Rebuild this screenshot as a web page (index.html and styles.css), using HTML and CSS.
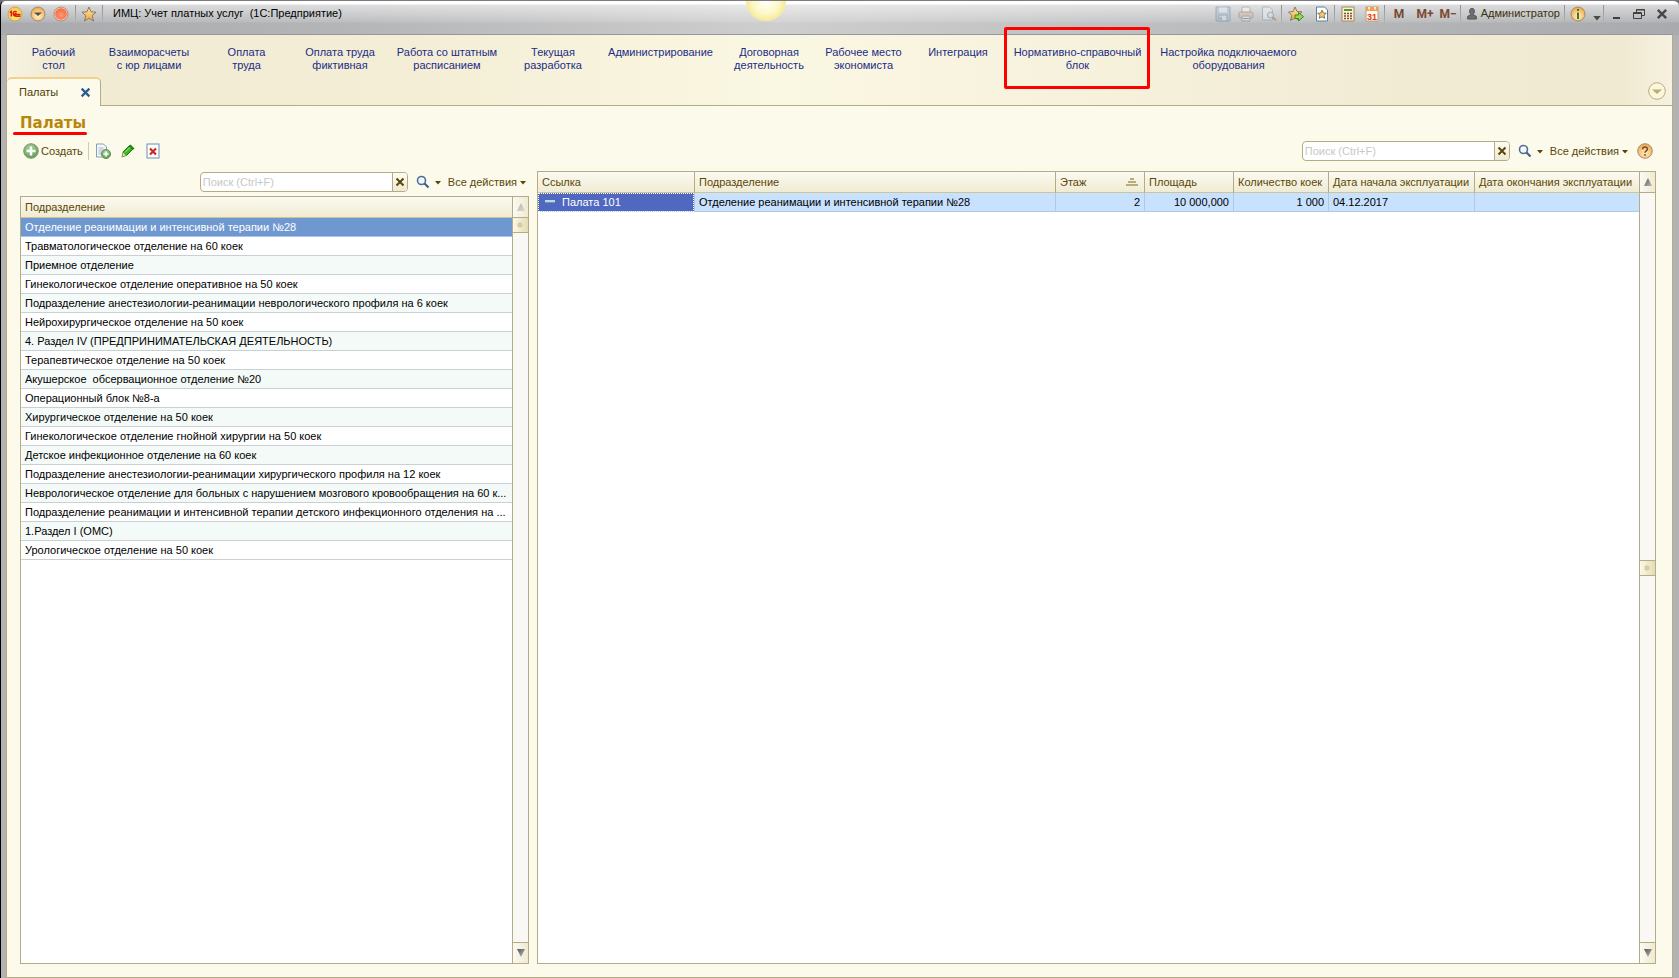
FILE: index.html
```html
<!DOCTYPE html>
<html lang="ru">
<head>
<meta charset="utf-8">
<title>ИМЦ: Учет платных услуг (1С:Предприятие)</title>
<link rel="stylesheet" href="styles.css">
</head>
<body>
<svg class="defs" aria-hidden="true">
  <defs>
    <radialGradient id="orange" cx="50%" cy="65%" r="60%"><stop offset="0" stop-color="#fff0c8"/><stop offset=".6" stop-color="#f8c880"/><stop offset="1" stop-color="#eda850"/></radialGradient>
    <radialGradient id="red" cx="50%" cy="60%" r="60%"><stop offset="0" stop-color="#ff9a78"/><stop offset="1" stop-color="#f4683c"/></radialGradient>
    <radialGradient id="yellow" cx="50%" cy="60%" r="60%"><stop offset="0" stop-color="#fff27a"/><stop offset="1" stop-color="#f8c840"/></radialGradient>
    <radialGradient id="green" cx="45%" cy="35%" r="65%"><stop offset="0" stop-color="#b4d8a4"/><stop offset="1" stop-color="#5c9c50"/></radialGradient>
    <linearGradient id="gold" x1="0" y1="0" x2="0" y2="1"><stop offset="0" stop-color="#ffe8a8"/><stop offset="1" stop-color="#f0a840"/></linearGradient>
    <linearGradient id="tri" x1="0" y1="0" x2="1" y2="1"><stop offset="0" stop-color="#555"/><stop offset="1" stop-color="#bbb"/></linearGradient>
    <symbol id="search" viewBox="0 0 14 14"><circle cx="5.5" cy="5.5" r="4" fill="#f4f8fc" stroke="#4c6e98" stroke-width="1.6"/><path d="M8.5 8.5l4 4" stroke="#3c5f8c" stroke-width="2.2"/></symbol>
    <symbol id="down" viewBox="0 0 6 4"><path d="M0 0h6L3 3.5z" fill="currentColor"/></symbol>
    <symbol id="cross" viewBox="0 0 10 10"><path d="M1.5 1.5l7 7M8.5 1.5l-7 7" stroke="currentColor" stroke-width="2"/></symbol>
  </defs>
</svg>
<div class="window">
  <header class="titlebar">
    <div class="group start">
      <button class="tool" aria-label="Меню"><svg width="16" height="16" viewBox="0 0 16 16"><circle cx="8" cy="8" r="7" fill="url(#yellow)" stroke="#c8a468"/><path d="M2.800 6.500l1.500-1v5M9.500 6.200C9 5 6.200 5.200 6.200 7.600s1.800 2.600 3.300 2.600h4M9.500 7.700c-1-.5-1.800 0-1.400.7h5.400" fill="none" stroke="#e01c10" stroke-width="1.500"/></svg></button>
      <button class="tool" aria-label="Развернуть меню"><svg width="16" height="16" viewBox="0 0 16 16"><circle cx="8" cy="8" r="7" fill="url(#orange)" stroke="#a08c70"/><path d="M4 6.500h8L8 10z" fill="#505050"/></svg></button>
      <button class="tool" aria-label="Остановить"><svg width="16" height="16" viewBox="0 0 16 16"><circle cx="8" cy="8" r="7" fill="#fbd0b8" stroke="#b08878"/><circle cx="8" cy="8" r="5.800" fill="url(#red)"/></svg></button>
      <i class="sep"></i>
      <button class="tool wide" aria-label="Избранное"><svg width="16" height="16" viewBox="0 0 16 16"><path d="M8 1l2 4.800 5 .4-3.800 3.400L12.500 15 8 12l-4.500 3 1.300-5.400L1 6.200l5-.4z" fill="url(#gold)" stroke="#8c7858"/></svg></button>
      <i class="sep"></i>
    </div>
    <div class="caption">ИМЦ: Учет платных услуг&nbsp; (1С:Предприятие)</div>
    <div class="group end">
      <button class="tool faded" aria-label="Сохранить"><svg width="16" height="16" viewBox="0 0 16 16"><path d="M1 1h14v14H1z" fill="#a0bcd0" stroke="#5480a0"/><path d="M4 1.500h8v5H4z" fill="#e8f0f4"/><path d="M4 9h8v6H4z" fill="#dce6ec" stroke="#5480a0"/><path d="M6 11v3" stroke="#5480a0" stroke-width="1.500"/></svg></button>
      <button class="tool faded" aria-label="Печать"><svg width="16" height="16" viewBox="0 0 16 16"><path d="M4 1h7l1 1v5H4z" fill="#fff" stroke="#888"/><rect x="1" y="6" width="14" height="6" rx="1.500" fill="#d8b8a0" stroke="#807068"/><path d="M4 10h8v5H4z" fill="#eee" stroke="#777"/><path d="M5 12.500h6" stroke="#666"/></svg></button>
      <button class="tool faded" aria-label="Просмотр"><svg width="16" height="16" viewBox="0 0 16 16"><path d="M1.500 1h7l3 3v10h-10z" fill="#f0f4f8" stroke="#7890a8"/><circle cx="9.500" cy="9" r="3" fill="#d8e8f4" stroke="#68788c"/><path d="M11.500 11l3.500 3.500" stroke="#b06840" stroke-width="2"/></svg></button>
      <i class="sep"></i>
      <button class="tool wider" aria-label="Добавить в избранное"><svg width="16" height="16" viewBox="0 0 16 16"><path d="M7 1l2 4.500 5 .4-3.800 3.400 1.300 5L7 12l-4.500 2.500 1.300-5L.6 6l4.600-.5z" fill="url(#gold)" stroke="#8c7858"/><path d="M7 9h3.500V6.500l5 4.200-5 4.200V12.500H7z" fill="#98d858" stroke="#348c20"/></svg></button>
      <button class="tool" aria-label="Список избранного"><svg width="14" height="16" viewBox="0 0 14 16"><path d="M1.500 1h8l3 3v11h-11z" fill="#fff" stroke="#5c8098"/><path d="M7 4l1.300 3 3 .2L9 9.300l.8 3L7 10.800l-2.800 1.500.8-3-2.300-2 3-.3z" fill="#f8cc70" stroke="#705c40" stroke-width=".8"/></svg></button>
      <i class="sep"></i>
      <button class="tool wide" aria-label="Калькулятор"><svg width="14" height="16" viewBox="0 0 14 16"><rect x="1" y="1" width="12" height="14" fill="#fdf0d0" stroke="#a08860"/><path d="M3 3h8v2H3z" fill="#4c9c30"/><path d="M3 7.500h8M3 10h8M3 12.500h8" stroke="#7c5038" stroke-width="1.400" stroke-dasharray="2 1"/></svg></button>
      <button class="tool" aria-label="Календарь"><svg width="14" height="16" viewBox="0 0 14 16"><rect x="1" y="1" width="12" height="14" fill="#fff8e8" stroke="#b0a088"/><path d="M1 1h12v4H1z" fill="#f0a050"/><path d="M4 1v2.500M10 1v2.500" stroke="#fff" stroke-width="1.500"/><text class="cal" x="7" y="13.500" text-anchor="middle">31</text></svg></button>
      <i class="sep"></i>
      <button class="tool mem wider">M</button>
      <button class="tool mem">M+</button>
      <button class="tool mem">M−</button>
      <i class="sep"></i>
      <button class="user"><svg width="10" height="12" viewBox="0 0 10 12"><path d="M5 .500c1.600 0 2.400 1 2.400 2.600S6.600 6 6.300 6.300v.8l3 1.200v2.700H.7V8.300l3-1.200v-.8C3.400 6 2.600 4.700 2.600 3.100S3.400.5 5 .5z" fill="#707070" stroke="#505050"/></svg>Администратор</button>
      <i class="sep"></i>
      <button class="tool wide" aria-label="Информация"><svg width="16" height="16" viewBox="0 0 16 16"><circle cx="8" cy="8" r="7" fill="url(#orange)" stroke="#a88860"/><path d="M8 3v2M8 6.500V13" stroke="#3c7c20" stroke-width="2"/></svg></button>
      <button class="tool narrow low" aria-label="Ещё"><svg width="8" height="5"><use href="#down"/></svg></button>
      <i class="sep"></i>
      <button class="tool" aria-label="Свернуть"><svg width="14" height="14" viewBox="0 0 14 14"><path d="M4 11h7" stroke="#404040" stroke-width="2"/></svg></button>
      <button class="tool" aria-label="Восстановить"><svg width="14" height="14" viewBox="0 0 14 14"><path d="M4.500 5V2.500h8v6H10M4 3h9" fill="none" stroke="#404040"/><path d="M1.500 5.500h8v6h-8zM1 6.500h9" fill="none" stroke="#404040"/></svg></button>
      <button class="tool" aria-label="Закрыть"><svg width="12" height="12"><use href="#cross"/></svg></button>
    </div>
  </header>
  <i class="orb"></i>

  <div class="panel">
    <div class="top">
      <nav class="sections">
        <a href="#">Рабочий<br>стол</a>
        <a href="#">Взаиморасчеты<br>с юр лицами</a>
        <a href="#">Оплата<br>труда</a>
        <a href="#">Оплата труда<br>фиктивная</a>
        <a href="#">Работа со штатным<br>расписанием</a>
        <a href="#">Текущая<br>разработка</a>
        <a href="#">Администрирование</a>
        <a href="#">Договорная<br>деятельность</a>
        <a href="#">Рабочее место<br>экономиста</a>
        <a href="#">Интеграция</a>
        <a href="#" class="marked">Нормативно-справочный<br>блок</a>
        <a href="#">Настройка подключаемого<br>оборудования</a>
      </nav>
      <div class="tabs">
        <div class="tab"><span>Палаты</span><button aria-label="Закрыть вкладку"><svg width="11" height="11"><use href="#cross"/></svg></button></div>
        <button class="collapse" aria-label="Свернуть панель"><svg width="18" height="18" viewBox="0 0 18 18"><circle cx="9" cy="9" r="8.300" fill="#fbf6dc" stroke="#b8ae78"/><path d="M4 7.500h10L9 12z" fill="#b8ae70"/></svg></button>
      </div>
    </div>

    <main class="page">
      <h1>Палаты</h1>
      <div class="commands">
        <button class="create"><svg width="16" height="16" viewBox="0 0 16 16"><circle cx="8" cy="8" r="7.300" fill="url(#green)" stroke="#7c9c70"/><path d="M8 3.500v9M3.500 8h9" stroke="#fff" stroke-width="2.400"/></svg>Создать</button>
        <i class="line"></i>
        <button class="cmd" aria-label="Скопировать"><svg width="16" height="16" viewBox="0 0 16 16"><path d="M1.500 1h7l3 3v10h-10z" fill="#f4f8fc" stroke="#84a0b8"/><path d="M3.500 5h5M3.500 7h6M3.500 9h4M3.500 11h3" stroke="#a8b8c8"/><circle cx="11" cy="11" r="4.500" fill="url(#green)" stroke="#5c8c54"/><path d="M11 8.500v5M8.500 11h5" stroke="#fff" stroke-width="1.600"/></svg></button>
        <button class="cmd" aria-label="Изменить"><svg width="14" height="14" viewBox="0 0 14 14"><path d="M2 8l6-6 3.500 3.500-6 6z" fill="#3cb424" stroke="#1c7c10"/><path d="M8 2l1.500-1L13 4.500 11.500 5.500z" fill="#208c14" stroke="#1c7c10"/><path d="M2 8l-1 5 4.500-1.500z" fill="#e8e4a0" stroke="#4c8c30" stroke-width=".8"/><path d="M4 8.500l5-5" stroke="#a0e888"/></svg></button>
        <button class="cmd" aria-label="Удалить"><svg width="14" height="16" viewBox="0 0 14 16"><rect x="1" y="1" width="12" height="14" fill="#fbfdff" stroke="#6c90b0"/><path d="M4 5.500l6 6M10 5.500l-6 6" stroke="#cc2820" stroke-width="2.200"/></svg></button>
        <div class="finder">
          <label class="search"><input type="text" placeholder="Поиск (Ctrl+F)" aria-label="Поиск палаты"><button aria-label="Очистить"><svg width="10" height="10"><use href="#cross"/></svg></button></label>
          <button class="lens" aria-label="Найти"><svg width="14" height="14"><use href="#search"/></svg><svg width="6" height="4"><use href="#down"/></svg></button>
          <button class="all">Все действия<svg width="6" height="4"><use href="#down"/></svg></button>
          <button class="help" aria-label="Справка"><svg width="16" height="16" viewBox="0 0 16 16"><circle cx="8" cy="8" r="7.300" fill="url(#orange)" stroke="#b08c70"/><path d="M5.600 6.300C5.600 3.200 10.400 3.200 10.400 6 10.400 7.800 8 7.800 8 9.800M8 11v1.700" fill="none" stroke="#7c4828" stroke-width="1.500"/></svg></button>
        </div>
      </div>

      <div class="split">
        <section class="left">
          <div class="finder">
            <label class="search"><input type="text" placeholder="Поиск (Ctrl+F)" aria-label="Поиск подразделения"><button aria-label="Очистить"><svg width="10" height="10"><use href="#cross"/></svg></button></label>
            <button class="lens" aria-label="Найти"><svg width="14" height="14"><use href="#search"/></svg><svg width="6" height="4"><use href="#down"/></svg></button>
            <button class="all">Все действия<svg width="6" height="4"><use href="#down"/></svg></button>
          </div>
          <div class="box">
            <div class="area">
              <table class="list">
                <thead><tr><th>Подразделение</th></tr></thead>
                <tbody>
                  <tr class="current"><td>Отделение реанимации и интенсивной терапии №28</td></tr>
                  <tr><td>Травматологическое отделение на 60 коек</td></tr>
                  <tr><td>Приемное отделение</td></tr>
                  <tr><td>Гинекологическое отделение оперативное на 50 коек</td></tr>
                  <tr><td>Подразделение анестезиологии-реанимации неврологического профиля на 6 коек</td></tr>
                  <tr><td>Нейрохирургическое отделение на 50 коек</td></tr>
                  <tr><td>4. Раздел IV (ПРЕДПРИНИМАТЕЛЬСКАЯ ДЕЯТЕЛЬНОСТЬ)</td></tr>
                  <tr><td>Терапевтическое отделение на 50 коек</td></tr>
                  <tr><td>Акушерское&nbsp; обсервационное отделение №20</td></tr>
                  <tr><td>Операционный блок №8-а</td></tr>
                  <tr><td>Хирургическое отделение на 50 коек</td></tr>
                  <tr><td>Гинекологическое отделение гнойной хирургии на 50 коек</td></tr>
                  <tr><td>Детское инфекционное отделение на 60 коек</td></tr>
                  <tr><td>Подразделение анестезиологии-реанимации хирургического профиля на 12 коек</td></tr>
                  <tr><td>Неврологическое отделение для больных с нарушением мозгового кровообращения на 60 к...</td></tr>
                  <tr><td>Подразделение реанимации и интенсивной терапии детского инфекционного отделения на ...</td></tr>
                  <tr><td>1.Раздел I (ОМС)</td></tr>
                  <tr><td>Урологическое отделение на 50 коек</td></tr>
                </tbody>
              </table>
            </div>
            <div class="scroll">
              <button class="up off" aria-label="Вверх"><svg width="8" height="8" viewBox="0 0 8 8"><path d="M4 0l4 8H0z" fill="url(#tri)"/></svg></button>
              <div class="track"><i class="thumb"></i></div>
              <button class="dn" aria-label="Вниз"><svg width="8" height="8" viewBox="0 0 8 8"><path d="M0 0h8L4 8z" fill="url(#tri)"/></svg></button>
            </div>
          </div>
        </section>

        <section class="right">
          <div class="box">
            <div class="area">
              <table class="wards">
                <colgroup><col class="c-ref"><col><col class="c-num"><col class="c-num"><col class="c-beds"><col class="c-start"><col class="c-end"></colgroup>
                <thead><tr><th>Ссылка</th><th>Подразделение</th><th><div class="sorted">Этаж<svg width="12" height="8" viewBox="0 0 12 8"><path d="M4 1h4M2 4h8M0 7h12" stroke="#b8ad78" stroke-width="2"/></svg></div></th><th>Площадь</th><th>Количество коек</th><th>Дата начала эксплуатации</th><th>Дата окончания эксплуатации</th></tr></thead>
                <tbody><tr><td class="focus"><i class="dash"></i>Палата 101</td><td>Отделение реанимации и интенсивной терапии №28</td><td class="num">2</td><td class="num">10 000,000</td><td class="num">1 000</td><td>04.12.2017</td><td></td></tr></tbody>
              </table>
            </div>
            <div class="scroll">
              <button class="up" aria-label="Вверх"><svg width="8" height="8" viewBox="0 0 8 8"><path d="M4 0l4 8H0z" fill="url(#tri)"/></svg></button>
              <div class="track middle"><i class="thumb"></i></div>
              <button class="dn" aria-label="Вниз"><svg width="8" height="8" viewBox="0 0 8 8"><path d="M0 0h8L4 8z" fill="url(#tri)"/></svg></button>
            </div>
          </div>
        </section>
      </div>
    </main>
  </div>
</div>
</body>
</html>
```
FILE: styles.css
```css
* { box-sizing: border-box; }

body {
  margin: 0;
  font: 11px/13px "Liberation Sans", Arial, sans-serif;
  color: #000;
  background: #707072;
}

button {
  display: flex;
  align-items: center;
  justify-content: center;
  margin: 0;
  padding: 0;
  border: 0;
  background: none;
  font: inherit;
  color: inherit;
}

svg { display: block; flex: none; }
.defs { position: absolute; width: 0; height: 0; }

.window {
  position: relative;
  display: flex;
  flex-direction: column;
  height: 100vh;
  padding: 0 6px 0 5px;
  border-left: 1px solid #000;
  border-top: 1px solid #7c7a7c;
  border-radius: 6px 6px 0 0;
  overflow: hidden;
  background:
    linear-gradient(to bottom, #fff 0, #fff 3px, rgba(255,255,255,.55) 4px, rgba(255,255,255,.12) 21px, rgba(255,255,255,0) 22px) top / 100% 34px no-repeat,
    linear-gradient(to right, #a9aaad, #b4b5b7 20%, #cecece 46%, #b9babc 75%, #a9aaad) top / 100% 34px no-repeat,
    #b2b1b4;
}

.titlebar {
  display: flex;
  align-items: flex-start;
  height: 33px;
  flex: none;
}
.group { display: flex; align-items: center; height: 25px; }
.group.start { margin-left: -3px; }
.caption { flex: 1; padding-left: 10px; line-height: 24px; }
.tool { width: 23px; height: 24px; color: #484848; }
.tool.wide { width: 26px; }
.tool.wider { width: 29px; }
.tool.narrow { width: 12px; }
.tool.low { padding-top: 10px; }
.tool.faded { opacity: .45; }
.group .sep {
  width: 1px;
  height: 18px;
  background: linear-gradient(#909090, #b4b4b4);
}
.start .tool + .sep { margin-left: 3px; }
.start .tool.wide + .sep { margin-left: 0; }
.mem { font: bold 12px/24px Roboto, sans-serif; color: #7a4a30; }
.user { gap: 4px; padding: 0 4px 0 6px; height: 24px; color: #3c3008; }
.cal { font: bold 9px "Liberation Sans", sans-serif; fill: #e03c18; }

.orb {
  position: absolute;
  left: 745px;
  top: -20px;
  width: 40px;
  height: 40px;
  border-radius: 50%;
  background: radial-gradient(circle, #fff 0, #fcf8c8 45%, #f4e48c 80%, #ecd070 100%);
}

.panel {
  flex: 1;
  display: flex;
  flex-direction: column;
  min-height: 0;
  border: 1px solid #b5ab84;
  border-top-color: #96979a;
  background: #fcfaeb;
}

.top {
  flex: none;
  border-bottom: 1px solid #b5ab84;
  background: linear-gradient(to right, #f7f3e2 0, #f1ebd3 3%, #f4eed6 25%, #faf7e2 46%, #f8f3de 60%, #f1ebd4 85%, #f0ead2 97%, #f6f1e0);
}

.sections {
  display: grid;
  grid-template-columns: 93px 98px 97px 90px 124px 88px 127px 90px 99px 90px 149px 153px;
  height: 42px;
  padding-top: 11px;
}
.sections a {
  position: relative;
  color: #1c2c84;
  text-align: center;
  text-decoration: none;
}
.marked::before {
  content: "";
  position: absolute;
  left: 1px;
  right: 2px;
  top: -19px;
  height: 56px;
  border: 3px solid #f00;
  border-radius: 2px;
}

.tabs {
  display: flex;
  align-items: center;
  justify-content: space-between;
  height: 28px;
  padding-right: 6px;
}
.tab {
  display: flex;
  align-items: center;
  justify-content: space-between;
  width: 94px;
  height: 29px;
  margin-bottom: -1px;
  padding: 0 9px 0 12px;
  border-right: 1px solid #b5ab84;
  border-top: 2px solid #f4d08c;
  border-radius: 5px 5px 0 0;
  background: #fcfaeb;
  color: #4c3c08;
}
.tab button { color: #2c5c8c; }

.page {
  flex: 1;
  display: flex;
  flex-direction: column;
  min-height: 0;
  padding: 8px 16px 13px 13px;
  color: #5a4708;
}

h1 {
  position: relative;
  margin: 0;
  font: bold 15px/18px "DejaVu Sans", Verdana, sans-serif;
  color: #b8860b;
}
h1::after {
  content: "";
  position: absolute;
  left: -7px;
  top: 18px;
  width: 74px;
  height: 3px;
  border-radius: 2px;
  background: #f00;
}

.commands {
  display: flex;
  align-items: center;
  height: 20px;
  margin-top: 9px;
}
.create { gap: 2px; padding-left: 3px; }
.line { width: 1px; height: 18px; margin: 0 2px 0 5px; background: #d4cca8; }
.cmd { width: 25px; height: 20px; }

.finder { display: flex; align-items: center; height: 20px; }
.commands .finder { margin-left: auto; }
.search {
  display: flex;
  width: 208px;
  height: 20px;
  border: 1px solid #b5ab84;
  border-radius: 4px;
  background: #fff;
  overflow: hidden;
}
.search input {
  flex: 1;
  min-width: 0;
  padding: 0 2px;
  border: 0;
  outline: 0;
  background: none;
  font: inherit;
}
.search input::placeholder { color: #c8c8c8; opacity: 1; }
.search button {
  width: 15px;
  border-left: 1px solid #b5ab84;
  background: linear-gradient(#fdfcf4, #efead0);
}
.lens { gap: 5px; margin-left: 8px; }
.lens svg + svg, .all svg { margin-top: 2px; }
.all { gap: 3px; margin-left: 7px; }
.help { margin: 0 3px 0 9px; }

.split {
  flex: 1;
  display: grid;
  grid-template-columns: 509px minmax(0, 1fr);
  gap: 8px;
  min-height: 0;
  margin-top: 10px;
}
.left, .right { display: flex; flex-direction: column; min-height: 0; }
.left .finder { justify-content: flex-end; margin: 1px 3px 4px 0; }
.box {
  flex: 1;
  display: flex;
  min-height: 0;
  border: 1px solid #b5ab84;
  background: #fff;
}
.area { flex: 1; min-width: 0; overflow: hidden; }

table {
  width: 100%;
  table-layout: fixed;
  border-collapse: separate;
  border-spacing: 0;
}
th {
  height: 21px;
  padding: 0 4px;
  border-bottom: 1px solid #cdc49a;
  background: linear-gradient(#fbfaf2, #f0ebd2);
  color: #5a4708;
  font-weight: normal;
  text-align: left;
  white-space: nowrap;
}
td {
  height: 19px;
  padding: 1px 4px 0;
  border-bottom: 1px solid #c8d0d4;
  color: #000;
  white-space: nowrap;
  overflow: hidden;
}
.list tbody tr:nth-child(odd) td { background: #f4faf7; }
.list tbody tr.current td { background: #7098d0; color: #fff; border-bottom-color: #a8c4e8; }

.wards th + th { border-left: 1px solid #b5ab84; }
.wards td { background: #c8e1ff; border-bottom-color: #b0c8e4; }
.wards td + td { border-left: 1px solid #b0c8e4; }
.wards td.focus { background: #5068c0; color: #fff; outline: 1px dotted #fff; outline-offset: -1px; }
.wards td.num { text-align: right; }
.c-ref { width: 156px; }
.c-num { width: 89px; }
.c-beds { width: 95px; }
.c-start { width: 146px; }
.c-end { width: 165px; }
.sorted { display: flex; justify-content: space-between; align-items: center; padding-right: 2px; }
.dash {
  display: inline-block;
  width: 10px;
  height: 3px;
  margin: 0 7px 3px 3px;
  background: #b4dce4;
  border-bottom: 1px solid #6c98a8;
}

.scroll {
  flex: none;
  display: flex;
  flex-direction: column;
  width: 16px;
  border-left: 1px solid #b5ab84;
}
.scroll button {
  height: 21px;
  background: linear-gradient(to right, #fbfaf4, #efead0);
}
.scroll .up { border-bottom: 1px solid #b5ab84; }
.scroll .dn { border-top: 1px solid #b5ab84; }
.off svg { opacity: .4; }
.track { flex: 1; display: flex; flex-direction: column; background: #faf8f4; }
.track.middle { justify-content: center; }
.thumb {
  height: 15px;
  border-bottom: 1px solid #b5ab84;
  background:
    radial-gradient(circle at 7px 7px, #d8d2ac 0, #d0c9a0 2px, rgba(0,0,0,0) 3px),
    linear-gradient(to right, #fbf8e8, #e4dcb4);
}
.middle .thumb { height: 16px; border-top: 1px solid #b5ab84; }
```
